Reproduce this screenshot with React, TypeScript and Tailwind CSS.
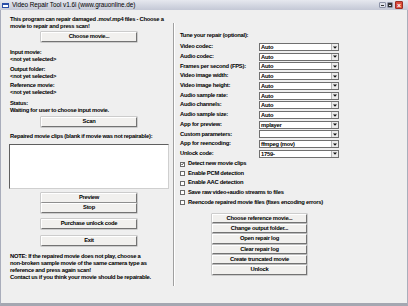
import React from "react";

const font = "font-['Liberation_Sans',Arial,sans-serif]";

const Btn = ({ label, className = "" }: { label: string; className?: string }) => (
  <div
    className={`flex items-center justify-center bg-[#f1f0ee] border border-t-white border-l-white border-r-[#737373] border-b-[#737373] shadow-[0_0_0_0.5px_#a9a9a9] text-[5.8px] font-bold tracking-[-0.25px] leading-none text-black ${className}`}
  >
    {label}
  </div>
);

const Combo = ({ value }: { value: string }) => (
  <div className="flex h-[8px] w-[80px] items-stretch border border-[#6f6f6f] bg-white">
    <div className="flex-1 pl-[1px] text-[5.8px] font-bold leading-[6px] tracking-[-0.25px] text-black">
      {value}
    </div>
    <div className="flex w-[7px] items-center justify-center border-l border-[#b8b8b8] bg-[#ececec]">
      <svg width="4" height="3" viewBox="0 0 4 3">
        <path d="M0 0.5h4L2 2.8z" fill="#111" />
      </svg>
    </div>
  </div>
);

const Check = ({ label, checked }: { label: string; checked?: boolean }) => (
  <div className="flex h-[9.6px] items-center">
    <div className="flex h-[5px] w-[5px] items-center justify-center border border-[#6a6a6a] bg-white">
      {checked && (
        <svg width="4" height="4" viewBox="0 0 4 4">
          <path d="M0.4 2l1.1 1.2L3.6 0.6" stroke="#111" strokeWidth="0.9" fill="none" />
        </svg>
      )}
    </div>
    <span className="ml-[3px] whitespace-nowrap text-[5.8px] font-bold leading-none tracking-[-0.25px]">{label}</span>
  </div>
);

const rows = [
  ["Video codec:", "Auto"],
  ["Audio codec:", "Auto"],
  ["Frames per second (FPS):", "Auto"],
  ["Video image width:", "Auto"],
  ["Video image height:", "Auto"],
  ["Audio sample rate:", "Auto"],
  ["Audio channels:", "Auto"],
  ["Audio sample size:", "Auto"],
  ["App for preview:", "mplayer"],
  ["Custom parameters:", ""],
  ["App for reencoding:", "ffmpeg (mov)"],
  ["Unlock code:", "1759-"],
];

const Line = ({ children }: { children: React.ReactNode }) => (
  <div className="h-[7px] whitespace-nowrap text-[5.8px] font-bold leading-[7px] tracking-[-0.25px]">
    {children}
  </div>
);

export default function App() {
  return (
    <div className={`flex h-[306px] w-[408px] flex-col overflow-hidden bg-[#efefef] text-black ${font}`}>
      {/* title bar */}
      <div className="flex h-[10px] items-center bg-gradient-to-b from-[#e6e8ef] to-[#c4c8d6] px-[1px]">
        <div className="ml-[1px] h-[5px] w-[7px] border border-[#2a4fa8] border-t-2 bg-white" />
        <span className="ml-[3px] whitespace-nowrap text-[6.4px] leading-none tracking-[-0.05px]">
          Video Repair Tool v1.6l (www.grauonline.de)
        </span>
        <div className="ml-auto flex items-center gap-[1px] pr-[4px]">
          <div className="flex h-[6.5px] w-[6.5px] items-end justify-center rounded-[1px] border border-[#8d93a8] bg-[#dfe2ea] pb-[1px]">
            <div className="h-[1px] w-[3px] bg-[#333]" />
          </div>
          <div className="flex h-[6.5px] w-[6.5px] items-center justify-center rounded-[1px] border border-[#8d93a8] bg-[#dfe2ea]">
            <div className="h-[3.5px] w-[3.5px] border border-t-2 border-[#333]" />
          </div>
          <div className="ml-[1px] flex h-[7.5px] w-[8px] items-center justify-center rounded-[1px] border border-[#9a2d22] bg-[#d9473a] text-[7px] font-bold leading-none text-white">
            ×
          </div>
        </div>
      </div>

      {/* body */}
      <div className="flex flex-1 border-x border-b-[3px] border-x-[#a9adbb] border-b-[#a4a7b1]">
        {/* left */}
        <div className="ml-[9px] flex w-[159px] flex-col">
          <div className="mt-[6px]">
            <Line>This program can repair damaged .mov/.mp4 files - Choose a</Line>
            <Line>movie to repair and press scan!</Line>
          </div>
          <Btn label="Choose movie..." className="ml-[31px] mt-[2px] h-[10px] w-[96px]" />
          <div className="mt-[7px]">
            <Line>Input movie:</Line>
            <Line>&lt;not yet selected&gt;</Line>
          </div>
          <div className="mt-[3px]">
            <Line>Output folder:</Line>
            <Line>&lt;not yet selected&gt;</Line>
          </div>
          <div className="mt-[2px]">
            <Line>Reference movie:</Line>
            <Line>&lt;not yet selected&gt;</Line>
          </div>
          <div className="mt-[4px]">
            <Line>Status:</Line>
            <Line>Waiting for user to choose input movie.</Line>
          </div>
          <Btn label="Scan" className="ml-[31px] mt-[3px] h-[10px] w-[96px]" />
          <div className="mt-[6px]">
            <Line>Repaired movie clips (blank if movie was not repairable):</Line>
          </div>
          <div className="-ml-px mt-[4px] h-[45px] w-[160px] border border-[#5f5f5f] border-b-[#cfcfcf] border-r-[#cfcfcf] bg-white" />
          <Btn label="Preview" className="ml-[31px] mt-[4px] h-[9.5px] w-[96px]" />
          <Btn label="Stop" className="ml-[31px] mt-[0.5px] h-[10px] w-[96px]" />
          <Btn label="Purchase unlock code" className="ml-[31px] mt-[6px] h-[10px] w-[96px]" />
          <Btn label="Exit" className="ml-[31px] mt-[7px] h-[10px] w-[96px]" />
          <div className="mt-[7px]">
            <Line>NOTE: If the repaired movie does not play, choose a</Line>
            <Line>non-broken sample movie of the same camera type as</Line>
            <Line>reference and press again scan!</Line>
            <Line>Contact us if you think your movie should be repairable.</Line>
          </div>
        </div>

        {/* separator */}
        <div className="ml-[4px] mt-[13px] flex h-[263px]">
          <div className="w-px bg-[#a0a0a0]" />
          <div className="w-px bg-white" />
        </div>

        {/* right */}
        <div className="ml-[5px] flex w-[160px] flex-col">
          <div className="mt-[22px]">
            <Line>Tune your repair (optional):</Line>
          </div>
          <div className="mt-[4px] flex flex-col gap-[1.73px]">
            {rows.map(([label, value]) => (
              <div key={label} className="flex h-[8px] items-center">
                <div className="w-[79px] whitespace-nowrap text-[5.8px] font-bold leading-none tracking-[-0.25px]">
                  {label}
                </div>
                <Combo value={value} />
              </div>
            ))}
          </div>
          <div className="mt-[1.5px] flex flex-col">
            <Check label="Detect new movie clips" checked />
            <Check label="Enable PCM detection" />
            <Check label="Enable AAC detection" />
            <Check label="Save raw video+audio streams to files" />
            <Check label="Reencode repaired movie files (fixes encoding errors)" />
          </div>
          <div className="ml-[32px] mt-[6.5px] flex w-[95px] flex-col gap-[1px]">
            <Btn label="Choose reference movie..." className="h-[9.3px]" />
            <Btn label="Change output folder..." className="h-[9.3px]" />
            <Btn label="Open repair log" className="h-[9.3px]" />
            <Btn label="Clear repair log" className="h-[9.3px]" />
            <Btn label="Create truncated movie" className="h-[9.3px]" />
            <Btn label="Unlock" className="h-[9.3px]" />
          </div>
        </div>
      </div>
    </div>
  );
}
